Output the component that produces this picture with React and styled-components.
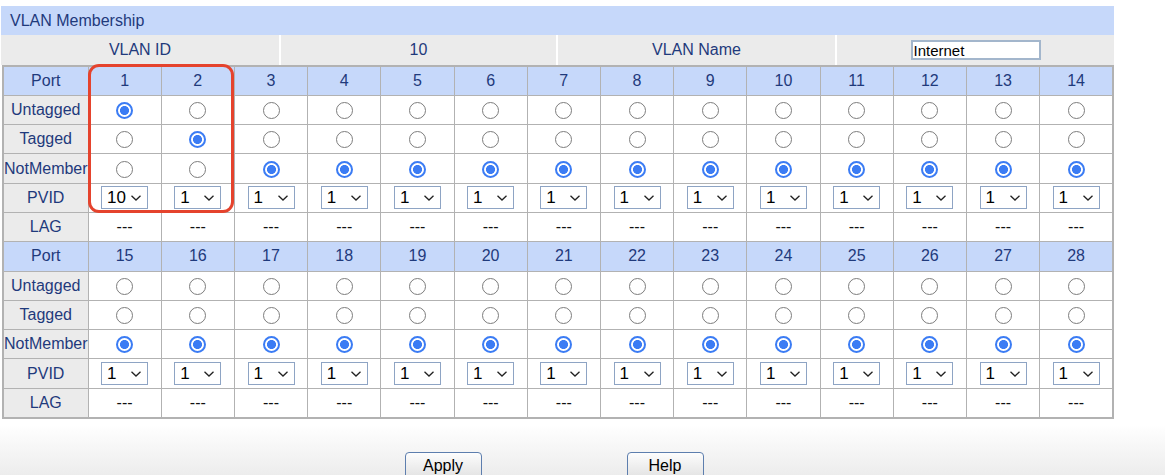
import React from "react";
import styled, { createGlobalStyle } from "styled-components";

const GlobalStyle = createGlobalStyle`
  html, body {
    margin: 0;
    padding: 0;
    background: #ffffff;
    font-family: "Liberation Sans", Arial, sans-serif;
  }
`;

const ports1 = [1, 2, 3, 4, 5, 6, 7, 8, 9, 10, 11, 12, 13, 14];
const ports2 = [15, 16, 17, 18, 19, 20, 21, 22, 23, 24, 25, 26, 27, 28];

// membership per port: "U", "T" or "N"
const membership = { 1: "U", 2: "T" };
const pvids = { 1: "10" };

function Radio({ checked }) {
  return <RadioDot checked={checked} />;
}

function PvidSelect({ value }) {
  return (
    <SelectBox>
      <span>{value}</span>
      <svg width="12" height="8" viewBox="0 0 12 8">
        <path d="M1.5 1.8 L6 6 L10.5 1.8" fill="none" stroke="#222" strokeWidth="1.3" />
      </svg>
    </SelectBox>
  );
}

function PortBlock({ ports }) {
  const rows = [
    { label: "Untagged", key: "U" },
    { label: "Tagged", key: "T" },
    { label: "NotMember", key: "N" },
  ];
  return (
    <>
      <Row>
        <HeadLabel>Port</HeadLabel>
        {ports.map((p) => (
          <HeadCell key={p}>{p}</HeadCell>
        ))}
      </Row>
      {rows.map((r) => (
        <Row key={r.key}>
          <Label>{r.label}</Label>
          {ports.map((p) => (
            <Cell key={p}>
              <Radio checked={(membership[p] || "N") === r.key} />
            </Cell>
          ))}
        </Row>
      ))}
      <Row>
        <Label>PVID</Label>
        {ports.map((p) => (
          <Cell key={p}>
            <PvidSelect value={pvids[p] || "1"} />
          </Cell>
        ))}
      </Row>
      <Row>
        <Label>LAG</Label>
        {ports.map((p) => (
          <Cell key={p}>---</Cell>
        ))}
      </Row>
    </>
  );
}

export default function App() {
  return (
    <>
      <GlobalStyle />
      <Page>
        <Title>VLAN Membership</Title>
        <InfoBar>
          <InfoCell>VLAN ID</InfoCell>
          <InfoCell>10</InfoCell>
          <InfoCell>VLAN Name</InfoCell>
          <InfoCell>
            <NameInput defaultValue="Internet" />
          </InfoCell>
        </InfoBar>
        <TableWrap>
          <Table>
            <colgroup>
              <col style={{ width: 85 }} />
              {ports1.map((p) => (
                <col key={p} />
              ))}
            </colgroup>
            <tbody>
              <PortBlock ports={ports1} />
              <PortBlock ports={ports2} />
            </tbody>
          </Table>
          <Highlight />
        </TableWrap>
      </Page>
      <Footer>
        <ButtonRow>
          <Button>Apply</Button>
          <Button>Help</Button>
        </ButtonRow>
      </Footer>
    </>
  );
}

const Page = styled.div`
  width: 1113px;
  margin: 6px 0 0 1px;
`;

const Title = styled.div`
  height: 29px;
  line-height: 30px;
  background: #c6d8fa;
  color: #1f3a7c;
  font-size: 16px;
  padding-left: 9px;
`;

const InfoBar = styled.div`
  display: grid;
  grid-template-columns: 278px 275px 277px 1fr;
  column-gap: 2px;
  height: 30px;
  background: #ffffff;
`;

const InfoCell = styled.div`
  background: #ebebeb;
  color: #1f3a7c;
  font-size: 16px;
  display: flex;
  align-items: center;
  justify-content: center;
`;

const NameInput = styled.input`
  width: 124px;
  height: 16px;
  border: 2px solid #a3b6cc;
  padding: 0 1px;
  font-family: "Liberation Sans", Arial, sans-serif;
  font-size: 15px;
  color: #000;
  outline: none;
`;

const TableWrap = styled.div`
  position: relative;
  margin-left: 1px;
`;

const Table = styled.table`
  width: 1112px;
  table-layout: fixed;
  border-collapse: collapse;
  border: 2px solid #b2b2b2;
  font-size: 16px;
`;

const Row = styled.tr`
  height: 29.3px;
`;

const Label = styled.td`
  background: #ebebeb;
  color: #1f3a7c;
  text-align: center;
  border: 1.5px solid #b2b2b2;
  padding: 0;
  white-space: nowrap;
  overflow: hidden;
`;

const HeadLabel = styled(Label)`
  background: #c6d8fa;
`;

const Cell = styled.td`
  background: #ffffff;
  color: #111;
  text-align: center;
  vertical-align: middle;
  border: 1.5px solid #b2b2b2;
  padding: 0;
`;

const HeadCell = styled(Cell)`
  background: #c6d8fa;
  color: #1f3a7c;
`;

const RadioDot = styled.span`
  display: inline-block;
  vertical-align: middle;
  box-sizing: border-box;
  width: 17px;
  height: 17px;
  border-radius: 50%;
  border: ${(p) => (p.checked ? "2px solid #3b7cf4" : "1px solid #7d7d7d")};
  background: ${(p) =>
    p.checked
      ? "radial-gradient(circle, #3b7cf4 0 4.2px, #ffffff 4.8px)"
      : "#ffffff"};
`;

const SelectBox = styled.div`
  display: inline-flex;
  align-items: center;
  justify-content: space-between;
  vertical-align: middle;
  box-sizing: border-box;
  width: 47px;
  height: 23px;
  border: 1px solid #8ea4c4;
  padding: 0 5px 0 5px;
  font-size: 17px;
  color: #000;
  background: #fff;
`;

const Highlight = styled.div`
  position: absolute;
  left: 86px;
  top: -1px;
  width: 146px;
  height: 149px;
  box-sizing: border-box;
  border: 3px solid #e5432d;
  border-radius: 11px;
  pointer-events: none;
`;

const Footer = styled.div`
  height: 57px;
  padding-top: 33px;
  box-sizing: border-box;
  overflow: hidden;
  background: linear-gradient(#ffffff 10%, #ececec 100%);
`;

const ButtonRow = styled.div`
  width: 1108px;
  display: flex;
  justify-content: center;
  gap: 145px;
`;

const Button = styled.button`
  width: 77px;
  height: 32px;
  border: 1px solid #5d7eae;
  border-radius: 4px;
  background: linear-gradient(#fdfdfd, #dcdcdc);
  font-family: "Liberation Sans", Arial, sans-serif;
  font-size: 16px;
  color: #000;
  padding: 0 0 4px;
`;
